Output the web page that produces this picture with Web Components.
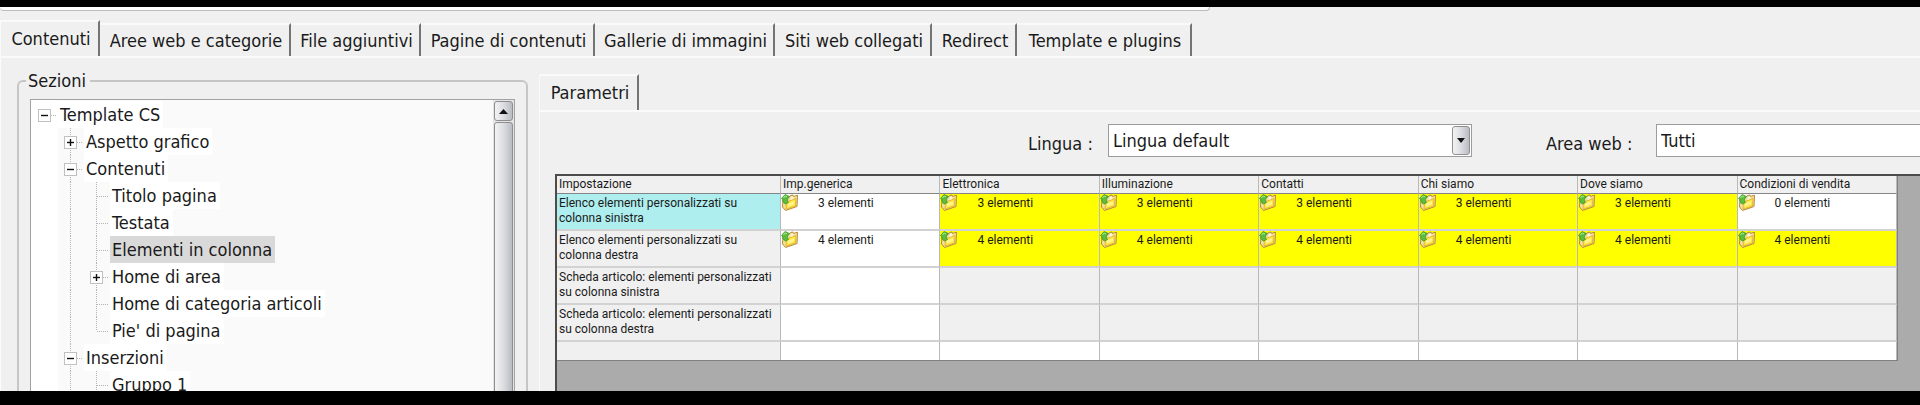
<!DOCTYPE html>
<html lang="it">
<head>
<meta charset="utf-8">
<title>Contenuti</title>
<style>
  html, body {
    height: 100%;
    margin: 0;
  }
  body {
    background: #000;
    color: #1a1a1a;
    font: 18px/22px "DejaVu Sans Condensed", "DejaVu Sans", sans-serif;
    overflow: hidden;
  }
</style>
</head>
<body>
<app-window>
  <tab-strip slot="tabs" label="Sezioni principali" columns="100px 191px 130px 174px 180px 157px 85px 175px">
    <tab-item selected>Contenuti</tab-item>
    <tab-item>Aree web e categorie</tab-item>
    <tab-item>File aggiuntivi</tab-item>
    <tab-item>Pagine di contenuti</tab-item>
    <tab-item>Gallerie di immagini</tab-item>
    <tab-item>Siti web collegati</tab-item>
    <tab-item>Redirect</tab-item>
    <tab-item>Template e plugins</tab-item>
  </tab-strip>
  <group-box slot="side" legend="Sezioni">
    <tree-view></tree-view>
  </group-box>
  <param-panel>
    <tab-strip slot="tabs" label="Parametri" columns="100px">
      <tab-item selected>Parametri</tab-item>
    </tab-strip>
    <select-field slot="filters" label="Lingua :" label-width="80px" value="Lingua default"></select-field>
    <select-field slot="filters" label="Area web :" label-width="110px" value="Tutti"></select-field>
    <settings-grid></settings-grid>
  </param-panel>
</app-window>

<script>
class AppWindow extends HTMLElement {
  constructor() {
    super();
    this.attachShadow({ mode: "open" });
  }

  connectedCallback() {
    this.shadowRoot.innerHTML = `
      <style>
        :host {
          display: flex;
          flex-direction: column;
          box-sizing: border-box;
          height: 100vh;
          border-top: 7px solid #000;
          border-bottom: 14px solid #000;
          background: #f0f0f0;
          overflow: hidden;
        }
        .upper-frame {
          flex: none;
          width: 63%;
          height: 4px;
          margin-bottom: 9px;
          box-sizing: border-box;
          border-bottom: 1px solid #bcbcbc;
          border-right: 1px solid #bcbcbc;
          border-radius: 0 0 4px 4px;
          background: #fff;
        }
        main {
          flex: 1;
          min-height: 0;
          display: grid;
          grid-template-columns: 511px minmax(0, 1fr);
          column-gap: 11px;
          padding-left: 16px;
          border-left: 1px solid #fcfcfc;
          overflow: hidden;
        }
      </style>
      <div class="upper-frame"></div>
      <slot name="tabs"></slot>
      <main>
        <slot name="side"></slot>
        <slot></slot>
      </main>
    `;
  }
}

class TabStrip extends HTMLElement {
  constructor() {
    super();
    this.attachShadow({ mode: "open" });
  }

  connectedCallback() {
    this.shadowRoot.innerHTML = `
      <style>
        :host {
          display: block;
          flex: none;
          border-bottom: 2px solid #fafafa;
        }
        nav {
          display: grid;
          grid-template-columns: ${this.getAttribute("columns")};
          align-items: end;
          height: 36px;
        }
      </style>
      <nav role="tablist" aria-label="${this.getAttribute("label")}"><slot></slot></nav>
    `;
  }
}

class TabItem extends HTMLElement {
  constructor() {
    super();
    this.attachShadow({ mode: "open" });
  }

  connectedCallback() {
    this.shadowRoot.innerHTML = `
      <style>
        :host {
          display: block;
        }
        button {
          box-sizing: border-box;
          width: 100%;
          height: 33px;
          padding: 1px 0 0 3px;
          border: 0;
          border-top: 2px solid #fafafa;
          border-right: 2px solid #747474;
          background: #f0f0f0;
          color: inherit;
          font: inherit;
          white-space: nowrap;
        }
        :host([selected]) button {
          height: 36px;
          padding-top: 0;
          border-left: 1px solid #fafafa;
        }
      </style>
      <button type="button" role="tab" aria-selected="${this.hasAttribute("selected")}"><slot></slot></button>
    `;
  }
}

class GroupBox extends HTMLElement {
  constructor() {
    super();
    this.attachShadow({ mode: "open" });
  }

  connectedCallback() {
    this.shadowRoot.innerHTML = `
      <style>
        :host {
          display: block;
          margin-top: 12px;
        }
        fieldset {
          margin: 0;
          padding: 7px 11px 0;
          border: 2px solid #c6c6c6;
          border-radius: 6px;
        }
        legend {
          padding: 0 4px 0 2px;
          margin-left: -4px;
        }
      </style>
      <fieldset>
        <legend>${this.getAttribute("legend")}</legend>
        <slot></slot>
      </fieldset>
    `;
  }
}

// guides: one letter per indent cell
//   . empty   | line through   t branch   l last branch   + closed   - open   r open root
const TREE = [
  ["r", "Template CS"],
  [".+", "Aspetto grafico"],
  [".-", "Contenuti"],
  [".|t", "Titolo pagina"],
  [".|t", "Testata"],
  [".|t", "Elementi in colonna", true],
  [".|+", "Home di area"],
  [".|t", "Home di categoria articoli"],
  [".|l", "Pie' di pagina"],
  [".-", "Inserzioni"],
  [".|t", "Gruppo 1"]
];

class TreeView extends HTMLElement {
  constructor() {
    super();
    this.attachShadow({ mode: "open" });
  }

  cell(type) {
    let art = "";
    if ("|t+-".includes(type)) art += `<path class="dots" d="M12.5 0V27"/>`;
    if (type === "l") art += `<path class="dots" d="M12.5 0V14"/>`;
    if ("tl+-r".includes(type)) art += `<path class="dots" d="M13 14.5H25"/>`;
    if ("+-r".includes(type)) {
      art += `<rect x="6.500" y="8.500" width="12" height="12" fill="#fff" stroke="#c0c0c0"/>
        <path d="M9 14.5H16" stroke="#111" stroke-width="1.4"/>`;
    }
    if (type === "+") art += `<path d="M12.5 11V18" stroke="#111" stroke-width="1.4"/>`;
    return `<svg width="26" height="27" viewBox="0 0 26 27" aria-hidden="true">${art}</svg>`;
  }

  connectedCallback() {
    const rows = TREE.map(([guides, label, selected]) => `
      <li role="treeitem" aria-level="${guides.length}" aria-selected="${!!selected}">
        ${[...guides].map((g) => this.cell(g)).join("")}<span>${label}</span>
      </li>`).join("");

    this.shadowRoot.innerHTML = `
      <style>
        :host {
          display: flex;
          border: 1px solid #a2a2a2;
          background: linear-gradient(90deg, #fff 27px, #fafafa 27px);
        }
        ul {
          flex: 1;
          margin: 0;
          padding: 1px;
          list-style: none;
        }
        li {
          display: flex;
          height: 27px;
        }
        svg {
          flex: none;
        }
        .dots {
          stroke: #b4b4b4;
          stroke-dasharray: 1 1;
          fill: none;
        }
        span {
          padding: 0 3px 0 2px;
          line-height: 27px;
          background: #fff;
          white-space: nowrap;
        }
        li[aria-selected="true"] span {
          background: #d9d9d9;
        }
        .scroll {
          display: flex;
          flex-direction: column;
          gap: 1px;
          width: 19px;
          padding: 1px;
          background: #e4e4e4;
        }
        .scroll button,
        .thumb {
          box-sizing: border-box;
          border: 1px solid #8e8e8e;
          border-radius: 3px;
          background: linear-gradient(90deg, #f3f3f4, #dcdde0 50%, #b9bcc4);
        }
        .scroll button {
          display: grid;
          place-items: center;
          height: 20px;
          padding: 0;
        }
        .thumb {
          flex: 1;
        }
      </style>
      <ul role="tree" aria-label="Sezioni">${rows}</ul>
      <div class="scroll">
        <button type="button" aria-label="Scorri in alto">
          <svg width="9" height="5" viewBox="0 0 9 5"><path d="M0 5L4.500 0L9 5Z" fill="#111"/></svg>
        </button>
        <div class="thumb"></div>
      </div>
    `;
  }
}

class ParamPanel extends HTMLElement {
  constructor() {
    super();
    this.attachShadow({ mode: "open" });
  }

  connectedCallback() {
    this.shadowRoot.innerHTML = `
      <style>
        :host {
          display: flex;
          flex-direction: column;
          min-width: 0;
          padding-top: 16px;
        }
        .content {
          flex: 1;
          display: flex;
          flex-direction: column;
          padding: 12px 0 0 15px;
          border-left: 1px solid #fafafa;
        }
        .filters {
          display: flex;
          gap: 74px;
          padding-left: 473px;
          margin-bottom: 17px;
          overflow: hidden;
        }
      </style>
      <slot name="tabs"></slot>
      <div class="content">
        <div class="filters"><slot name="filters"></slot></div>
        <slot></slot>
      </div>
    `;
  }
}

class SelectField extends HTMLElement {
  constructor() {
    super();
    this.attachShadow({ mode: "open" });
  }

  connectedCallback() {
    this.shadowRoot.innerHTML = `
      <style>
        :host {
          display: grid;
          flex: none;
          grid-template-columns: ${this.getAttribute("label-width")} 364px;
        }
        label {
          padding-top: 8px;
          line-height: 24px;
          white-space: nowrap;
        }
        .box {
          display: grid;
          grid-template-columns: 1fr 18px;
          box-sizing: border-box;
          height: 33px;
          padding: 1px;
          border: 1px solid #9c9c9c;
          background: #fff;
        }
        select {
          grid-area: 1 / 1 / 2 / 3;
          appearance: none;
          min-width: 0;
          padding: 0 24px 0 3px;
          border: 0;
          background: none;
          color: inherit;
          font: inherit;
        }
        .arrow {
          grid-area: 1 / 2;
          display: grid;
          place-items: center;
          border: 1px solid #909090;
          border-radius: 3px;
          background: linear-gradient(90deg, #f3f3f4, #dcdde0 50%, #b9bcc4);
          pointer-events: none;
        }
      </style>
      <label for="field">${this.getAttribute("label")}</label>
      <div class="box">
        <select id="field"><option>${this.getAttribute("value")}</option></select>
        <span class="arrow">
          <svg width="8" height="5" viewBox="0 0 8 5"><path d="M0 0H8L4 5Z" fill="#111"/></svg>
        </span>
      </div>
    `;
  }
}

const COLUMNS = ["Impostazione", "Imp.generica", "Elettronica", "Illuminazione", "Contatti", "Chi siamo", "Dove siamo", "Condizioni di vendita"];

// y = overridden (yellow), w = plain white, g = not available
const ROWS = [
  { name: "Elenco elementi personalizzati su colonna sinistra", counts: [3, 3, 3, 3, 3, 3, 0], fill: "wyyyyyw", current: true },
  { name: "Elenco elementi personalizzati su colonna destra", counts: [4, 4, 4, 4, 4, 4, 4], fill: "wyyyyyy" },
  { name: "Scheda articolo: elementi personalizzati su colonna sinistra", counts: [], fill: "wgggggg" },
  { name: "Scheda articolo: elementi personalizzati su colonna destra", counts: [], fill: "wgggggg" },
  { name: "", counts: [], fill: "wwwwwww" }
];

const FOLDER = `
  <svg width="17" height="17" viewBox="0 0 17 17" aria-hidden="true">
    <path d="M2 5L8 3.500L9.500 1.500L12 1L12.500 2.500L16.500 1.200L16 12.500L4.500 16.500L1.500 13Z" fill="#f5dfa0" stroke="#b58a35"/>
    <path d="M5.500 8L15 4.500L14.500 12L5 15.200Z" fill="#ffe53a" stroke="#d9a52c" stroke-width=".7"/>
    <path d="M7 9.500L13 7V10.500L7 13Z" fill="#fff58c"/>
    <path d="M10 3L12.500 2.500L12 5L9.500 6Z" fill="#fff8d8"/>
    <path d="M0.500 4.500L4 0.500L8.500 2.500L7 4.200C6.300 6 6.500 7.500 7.500 8.500L4.500 10C2.200 9 1.500 7 1.800 5.300Z" fill="#5cbc3c" stroke="#2f9426" stroke-width=".7"/>
    <path d="M2.500 4L4.200 2L6 3" fill="none" stroke="#b4ec98"/>
  </svg>`;

class SettingsGrid extends HTMLElement {
  constructor() {
    super();
    this.attachShadow({ mode: "open" });
  }

  connectedCallback() {
    const head = COLUMNS.map((c) => `<th scope="col">${c}</th>`).join("");
    const body = ROWS.map((row) => `
      <tr class="${row.current ? "current" : ""}">
        <th scope="row">${row.name}</th>
        ${[...row.fill].map((f, i) => `<td class="${f}">${
          i in row.counts ? `<div>${FOLDER}<span>${row.counts[i]} elementi</span></div>` : ""
        }</td>`).join("")}
      </tr>`).join("");

    this.shadowRoot.innerHTML = `
      <style>
        :host {
          display: block;
          flex: 1;
          padding-right: 22px;
          border: solid #4c4c4c;
          border-width: 2px 0 0 2px;
          background: #ababab;
          font: 12px/15px Roboto, "Liberation Sans", sans-serif;
        }
        table {
          width: 100%;
          table-layout: fixed;
          border-collapse: separate;
          border-spacing: 0;
          border-right: 1px solid #808080;
          border-bottom: 1px solid #808080;
        }
        col:first-child {
          width: 224px;
        }
        th, td {
          box-sizing: border-box;
          height: 37px;
          padding: 0;
          border-right: 1px solid #b9b9b9;
          border-bottom: 2px solid #d2d2d2;
          background: #f0f0f0;
          font-weight: normal;
          text-align: left;
          vertical-align: top;
        }
        th {
          padding: 2px 2px 0;
        }
        thead th {
          height: 18px;
          padding-top: 1px;
          border-bottom: 1px solid #858585;
        }
        tbody tr:last-child > * {
          height: 18px;
          border-bottom: 0;
        }
        .current th {
          background: #afeeee;
        }
        .w { background: #fff; }
        .y { background: #ff0; }
        .g { background: #f0f0f0; }
        div {
          display: flex;
          gap: 20px;
        }
        span {
          padding-top: 2px;
        }
      </style>
      <table>
        <colgroup><col>${"<col>".repeat(COLUMNS.length - 1)}</colgroup>
        <thead><tr>${head}</tr></thead>
        <tbody>${body}</tbody>
      </table>
    `;
  }
}

customElements.define("app-window", AppWindow);
customElements.define("tab-strip", TabStrip);
customElements.define("tab-item", TabItem);
customElements.define("group-box", GroupBox);
customElements.define("tree-view", TreeView);
customElements.define("param-panel", ParamPanel);
customElements.define("select-field", SelectField);
customElements.define("settings-grid", SettingsGrid);
</script>
</body>
</html>
